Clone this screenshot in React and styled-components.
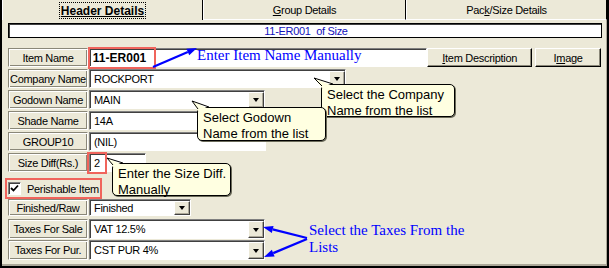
import React from "react";
import styled, { createGlobalStyle } from "styled-components";

const GlobalStyle = createGlobalStyle`
  html, body { margin: 0; padding: 0; background: #ece9d8; }
  body { font-family: "Liberation Sans", Arial, sans-serif; }
`;

const Window = styled.div`
  position: relative;
  width: 609px;
  height: 268px;
  box-sizing: border-box;
  background: #ece9d8;
  border-left: 2px solid #000;
  border-right: 2px solid #000;
  border-bottom: 2px solid #000;
  box-shadow: inset -1px -2px 0 #aca899;
  font-size: 11px;
  letter-spacing: -0.3px;
  color: #000;
  overflow: hidden;
`;

const Tabs = styled.div`
  display: flex;
  height: 20px;
`;

const Tab = styled.div`
  box-sizing: border-box;
  width: ${(p) => p.$w}px;
  display: flex;
  align-items: center;
  justify-content: center;
  border-left: 1px solid #fff;
  border-right: 1px solid #000;
  border-bottom: ${(p) => (p.$active ? "none" : "1px solid #fff")};
  font-size: ${(p) => (p.$active ? "12px" : "11px")};
  font-weight: ${(p) => (p.$active ? "bold" : "normal")};
  letter-spacing: ${(p) => (p.$active ? "0" : "-0.3px")};
`;

const Caption = styled.span`
  outline: 1px dotted #000;
  padding: 1px 1px 0;
  line-height: 14px;
  text-decoration: underline;
`;

const Accel = styled.span`
  text-decoration: underline;
`;

const Sheet = styled.div`
  padding: 3px 6px 0;
`;

const Strip = styled.div`
  box-sizing: border-box;
  width: 594px;
  height: 15px;
  border: 1px solid #000;
  box-shadow: inset 1px 1px 0 #404040;
  background: #fff;
  color: #1111bb;
  display: flex;
  align-items: center;
  justify-content: center;
  white-space: pre;
  padding-left: 2px;
`;

const Form = styled.div`
  display: flex;
  flex-direction: column;
  margin-top: 10px;
`;

const Row = styled.div`
  display: flex;
  align-items: center;
  height: ${(p) => p.$h || 19}px;
  margin-top: ${(p) => p.$mt || 0}px;
`;

const Label = styled.div`
  box-sizing: border-box;
  width: 80px;
  height: 100%;
  margin-right: 1px;
  display: flex;
  align-items: center;
  justify-content: center;
  border: 1px solid;
  border-color: #8a8778 #fff #fff #8a8778;
  box-shadow: inset 1px 1px 0 #fff, inset -1px -1px 0 #8a8778;
  white-space: nowrap;
`;

const Input = styled.div`
  position: relative;
  box-sizing: border-box;
  width: ${(p) => p.$w}px;
  height: 100%;
  display: flex;
  align-items: center;
  background: #fff;
  border-top: 1px solid #808080;
  border-left: 1px solid #808080;
  border-bottom: 1px solid #fff;
  border-right: 1px solid #fff;
  box-shadow: inset 1px 1px 0 #404040;
  padding-left: ${(p) => p.$pad ?? 4}px;
  white-space: nowrap;
`;

const Value = styled.span`
  flex: 1;
  font-size: ${(p) => (p.$bold ? "12px" : "11px")};
  font-weight: ${(p) => (p.$bold ? "bold" : "normal")};
  letter-spacing: ${(p) => (p.$bold ? "0" : "-0.3px")};
`;

const DropBtn = styled.div`
  box-sizing: border-box;
  width: 16px;
  height: calc(100% - 1px);
  margin-top: 1px;
  background: #ece9d8;
  border: 1px solid;
  border-color: #fff #404040 #404040 #fff;
  box-shadow: inset -1px -1px 0 #aca899;
  display: flex;
  align-items: center;
  justify-content: center;

  &::after {
    content: "";
    border-left: 3.5px solid transparent;
    border-right: 3.5px solid transparent;
    border-top: 4px solid #000;
    margin-right: 1px;
  }
`;

const Button = styled.div`
  box-sizing: border-box;
  width: ${(p) => p.$w}px;
  height: 19px;
  margin-left: ${(p) => p.$ml || 0}px;
  background: #ece9d8;
  border: 1px solid;
  border-color: #fff #000 #000 #fff;
  box-shadow: inset -1px -1px 0 #8a8778;
  display: flex;
  align-items: center;
  justify-content: center;
`;

const RedBox = styled.div`
  position: absolute;
  box-sizing: border-box;
  left: ${(p) => p.$x}px;
  top: ${(p) => p.$y}px;
  width: ${(p) => p.$w}px;
  height: ${(p) => p.$h}px;
  border: 2px solid #f0645c;
  pointer-events: none;
`;

const CheckRow = styled.div`
  position: relative;
  display: flex;
  align-items: center;
  gap: 6px;
  height: 100%;
`;

const Check = styled.div`
  box-sizing: border-box;
  width: 13px;
  height: 13px;
  background: #fff;
  border-top: 1px solid #808080;
  border-left: 1px solid #808080;
  border-bottom: 1px solid #fff;
  border-right: 1px solid #fff;
  box-shadow: inset 1px 1px 0 #404040;
  display: flex;
  align-items: center;
  justify-content: center;
`;

const Overlay = styled.div`
  position: absolute;
  left: -2px;
  top: 0;
  width: 609px;
  height: 268px;
  pointer-events: none;
`;

const Balloon = styled.div`
  position: absolute;
  box-sizing: border-box;
  left: ${(p) => p.$x}px;
  top: ${(p) => p.$y}px;
  width: ${(p) => p.$w}px;
  height: ${(p) => p.$h}px;
  background: #ffffe1;
  border: 1px solid #000;
  border-radius: 5px;
  box-shadow: 1px 1px 0 #6b6b5a;
  padding: 2px 0 0 5px;
  font-size: 13px;
  line-height: 16px;
  letter-spacing: 0;
  white-space: nowrap;
`;

const Note = styled.div`
  position: absolute;
  left: ${(p) => p.$x}px;
  top: ${(p) => p.$y}px;
  font-family: "Liberation Serif", "Times New Roman", serif;
  font-size: 15px;
  line-height: 17px;
  letter-spacing: 0;
  color: #0000ff;
  white-space: nowrap;
`;

const Canvas = styled.svg`
  position: absolute;
  left: 0;
  top: 0;
`;

function arrowHead(x1, y1, x2, y2) {
  const dx = x2 - x1;
  const dy = y2 - y1;
  const len = Math.hypot(dx, dy);
  const ux = dx / len;
  const uy = dy / len;
  const bx = x2 - 10 * ux;
  const by = y2 - 10 * uy;
  const px = -uy * 3.6;
  const py = ux * 3.6;
  return {
    line: [x1, y1, bx, by],
    head: `${x2},${y2} ${bx + px},${by + py} ${bx - px},${by - py}`,
  };
}

const arrows = [
  arrowHead(153, 67, 197, 48),
  arrowHead(307, 238, 263, 227),
  arrowHead(307, 239, 264, 257),
];

const tails = [
  [314, 78, 322, 86, 333, 84],
  [192, 101, 198, 109, 209, 107],
  [107, 158, 113, 165, 123, 163],
];

const Combo = ({ w, children }) => (
  <Input $w={w}>
    <Value>{children}</Value>
    <DropBtn />
  </Input>
);

const App = () => {
  return (
    <>
      <GlobalStyle />
      <Window>
        <Tabs>
          <Tab $w={201} $active>
            <Caption>Header Details</Caption>
          </Tab>
          <Tab $w={203}>
            <span>
              <Accel>G</Accel>roup Details
            </span>
          </Tab>
          <Tab $w={201}>
            <span>
              Pac<Accel>k</Accel>/Size Details
            </span>
          </Tab>
        </Tabs>

        <Sheet>
          <Strip>{"11-ER001  of Size"}</Strip>

          <Form>
            <Row $h={19}>
              <Label>Item Name</Label>
              <Input $w={339} $pad={3}>
                <Value $bold>11-ER001</Value>
                <RedBox $x={-2} $y={-2} $w={68} $h={22} />
              </Input>
              <Button $w={105}>
                <span>
                  <Accel>I</Accel>tem Description
                </span>
              </Button>
              <Button $w={66} $ml={3}>
                <span>
                  I<Accel>m</Accel>age
                </span>
              </Button>
            </Row>
            <Row $mt={2}>
              <Label>Company Name</Label>
              <Combo w={257}>ROCKPORT</Combo>
            </Row>
            <Row $mt={2}>
              <Label>Godown Name</Label>
              <Combo w={176}>MAIN</Combo>
            </Row>
            <Row $mt={2}>
              <Label>Shade Name</Label>
              <Input $w={176}>
                <Value>14A</Value>
              </Input>
            </Row>
            <Row $mt={2}>
              <Label>GROUP10</Label>
              <Input $w={177}>
                <Value>(NIL)</Value>
              </Input>
            </Row>
            <Row $mt={2}>
              <Label>Size Diff(Rs.)</Label>
              <Input $w={57}>
                <Value>2</Value>
                <RedBox $x={-3} $y={-2} $w={20} $h={22} />
              </Input>
            </Row>
            <Row $mt={7}>
              <CheckRow>
                <Check>
                  <svg width="9" height="9" viewBox="0 0 9 9">
                    <path d="M1 4 L3.5 6.5 L8 1.5" stroke="#000" strokeWidth="1.8" fill="none" />
                  </svg>
                </Check>
                <span>Perishable Item</span>
                <RedBox $x={-3} $y={-1} $w={97} $h={21} />
              </CheckRow>
            </Row>
            <Row $mt={1} $h={17}>
              <Label>Finished/Raw</Label>
              <Combo w={102}>Finished</Combo>
            </Row>
            <Row $mt={3} $h={20}>
              <Label>Taxes For Sale</Label>
              <Combo w={176}>VAT 12.5%</Combo>
            </Row>
            <Row $mt={1} $h={20}>
              <Label>Taxes For Pur.</Label>
              <Combo w={176}>CST PUR 4%</Combo>
            </Row>
          </Form>
        </Sheet>

        <Overlay>
          <Note $x={197} $y={47}>Enter Item Name Manually</Note>
          <Note $x={309} $y={222}>
            Select the Taxes From the
            <br />
            Lists
          </Note>

          <Balloon $x={321} $y={84} $w={134} $h={33}>
            Select the Company
            <br />
            Name from the list
          </Balloon>
          <Balloon $x={197} $y={107} $w={129} $h={34}>
            Select Godown
            <br />
            Name from the list
          </Balloon>
          <Balloon $x={112} $y={163} $w={119} $h={33}>
            Enter the Size Diff.
            <br />
            Manually
          </Balloon>

          <Canvas width="609" height="268">
            {tails.map(([tx, ty, ax, ay, bx, by], i) => (
              <g key={i}>
                <polygon
                  points={`${tx},${ty} ${ax},${ay + 2} ${bx},${by + 2}`}
                  fill="#ffffe1"
                />
                <polyline
                  points={`${ax},${ay} ${tx},${ty} ${bx},${by}`}
                  fill="none"
                  stroke="#000"
                  strokeWidth="1"
                />
              </g>
            ))}
            {arrows.map((a, i) => (
              <g key={i}>
                <line
                  x1={a.line[0]}
                  y1={a.line[1]}
                  x2={a.line[2]}
                  y2={a.line[3]}
                  stroke="#0000ff"
                  strokeWidth="2.2"
                />
                <polygon points={a.head} fill="#0000ff" />
              </g>
            ))}
          </Canvas>
        </Overlay>
      </Window>
    </>
  );
};

export default App;
